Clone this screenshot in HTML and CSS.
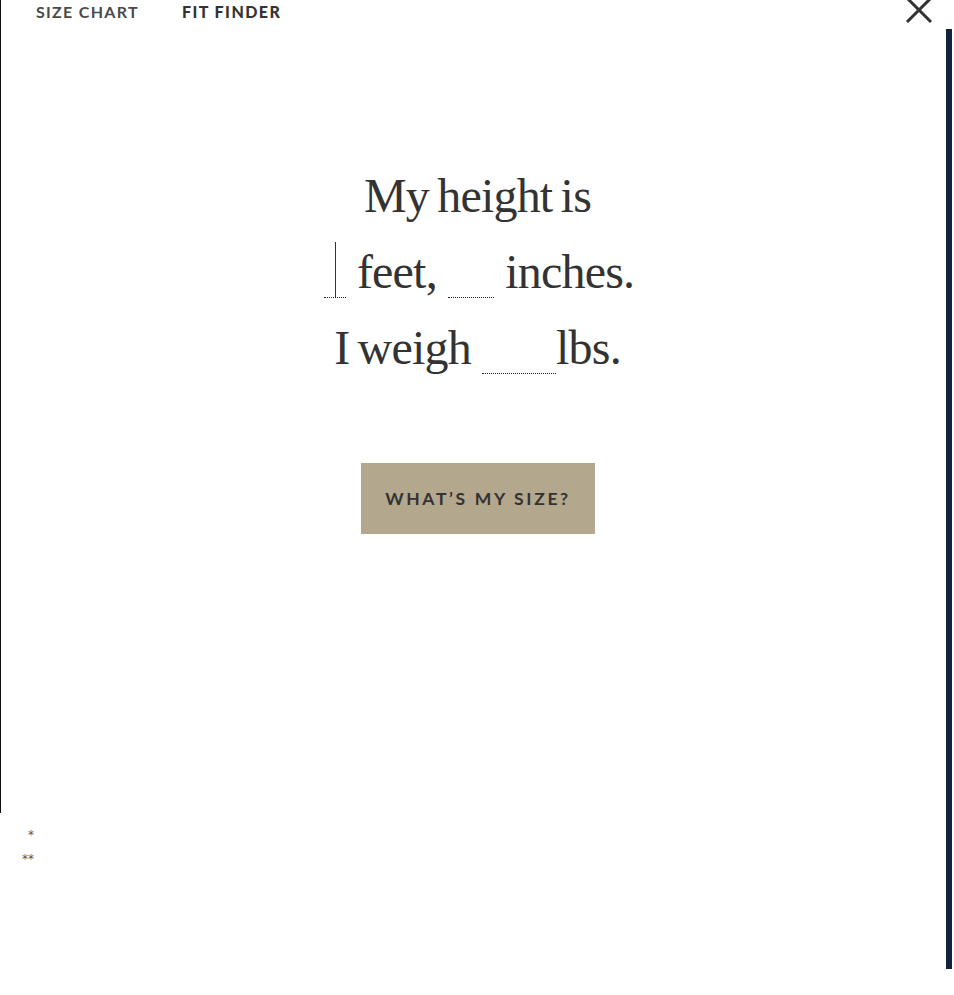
FILE: index.html
```html
<!DOCTYPE html>
<html>
<head>
<meta charset="utf-8">
<link rel="stylesheet" href="styles.css">
</head>
<body>
<div class="modal">
  <div class="panel">
    <nav class="tabs">
      <span class="tab">SIZE CHART</span>
      <span class="tab active">FIT FINDER</span>
    </nav>
    <div class="finder">
      <p class="line">My height is</p>
      <p class="line"><span class="field f-ft"><span class="caret"></span></span> feet, <span class="field f-in"></span> inches.</p>
      <p class="line">I weigh <span class="field f-lb"></span>lbs.</p>
      <button class="cta">WHAT’S MY SIZE?</button>
    </div>
  </div>
  <div class="notes">
    <div class="note">*</div>
    <div class="note">**</div>
  </div>
  <button class="close" aria-label="Close">
    <svg width="28" height="28" viewBox="0 0 28 28"><path d="M2 0 L26 24 M26 0 L2 24" stroke="#333" stroke-width="3" fill="none"/></svg>
  </button>
  <div class="scrollbar"></div>
</div>
</body>
</html>
```

FILE: styles.css
```css
html, body {
  margin: 0;
  padding: 0;
  background: #fff;
}
.modal {
  position: relative;
  width: 954px;
  height: 995px;
}
.panel {
  height: 813px;
  border-left: 1px solid #111;
  box-sizing: border-box;
}
.tabs {
  display: flex;
  gap: 43px;
  padding-left: 35px;
  padding-top: 2px;
}
.tab {
  font-family: Lato, "Open Sans", sans-serif;
  font-weight: 700;
  font-size: 16px;
  line-height: 20px;
  letter-spacing: 1.3px;
  color: #4a4a4a;
}
.tab.active {
  color: #333;
  font-weight: 900;
  letter-spacing: 1.45px;
}
.finder {
  padding-top: 136px;
  display: flex;
  flex-direction: column;
  align-items: center;
}
.line {
  margin: 0;
  font-family: "Liberation Serif", "Times New Roman", serif;
  font-size: 48px;
  line-height: 76px;
  letter-spacing: -0.8px;
  word-spacing: -3px;
  color: #333;
  text-align: center;
  white-space: nowrap;
}
.field {
  display: inline-block;
  position: relative;
  height: 55px;
  vertical-align: -10px;
  border-bottom: 1px dotted #222;
  margin: 0 3px;
}
.f-ft { width: 22px; }
.f-in { width: 46px; }
.f-lb { width: 74px; margin-right: 0; }
.caret {
  position: absolute;
  left: 11px;
  top: 0;
  bottom: 0;
  width: 1px;
  background: #333;
}
.cta {
  margin-top: 77px;
  width: 234px;
  height: 71px;
  border: none;
  background: #b3a78e;
  color: #333;
  font-family: Lato, "Open Sans", sans-serif;
  font-weight: 700;
  font-size: 17.5px;
  letter-spacing: 2.65px;
  padding: 0 0 0 1px;
}
.notes {
  width: 34px;
  padding-top: 10px;
  text-align: right;
  font-family: "DejaVu Sans", sans-serif;
  font-size: 12px;
  line-height: 24px;
  color: #555;
}
.close {
  position: absolute;
  top: -2px;
  left: 905px;
  width: 28px;
  height: 28px;
  padding: 0;
  border: none;
  background: none;
}
.close svg { display: block; }
.scrollbar {
  position: absolute;
  left: 946px;
  top: 29px;
  width: 6px;
  height: 940px;
  background: #10233a;
}
```
